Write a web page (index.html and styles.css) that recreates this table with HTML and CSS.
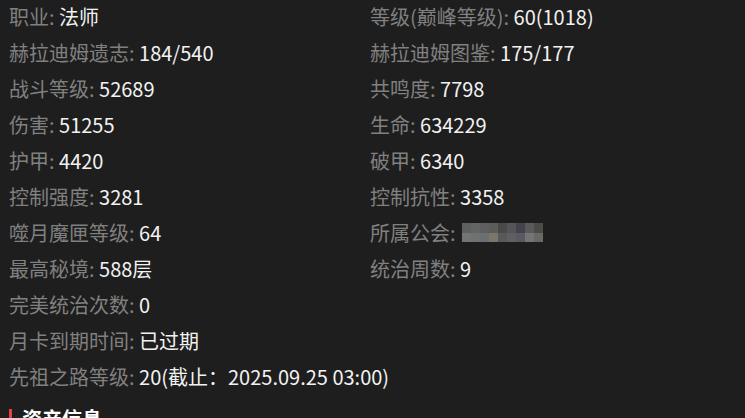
FILE: index.html
```html
<!DOCTYPE html>
<html lang="zh-CN">
<head>
<meta charset="utf-8">
<link rel="stylesheet" href="styles.css">
</head>
<body>
<div class="page">
  <div class="grid">
    <div class="row"><span class="label">职业: </span><span class="value">法师</span></div>
    <div class="row"><span class="label">等级(巅峰等级): </span><span class="value">60(1018)</span></div>
    <div class="row"><span class="label">赫拉迪姆遗志: </span><span class="value">184/540</span></div>
    <div class="row"><span class="label">赫拉迪姆图鉴: </span><span class="value">175/177</span></div>
    <div class="row"><span class="label">战斗等级: </span><span class="value">52689</span></div>
    <div class="row"><span class="label">共鸣度: </span><span class="value">7798</span></div>
    <div class="row"><span class="label">伤害: </span><span class="value">51255</span></div>
    <div class="row"><span class="label">生命: </span><span class="value">634229</span></div>
    <div class="row"><span class="label">护甲: </span><span class="value">4420</span></div>
    <div class="row"><span class="label">破甲: </span><span class="value">6340</span></div>
    <div class="row"><span class="label">控制强度: </span><span class="value">3281</span></div>
    <div class="row"><span class="label">控制抗性: </span><span class="value">3358</span></div>
    <div class="row"><span class="label">噬月魔匣等级: </span><span class="value">64</span></div>
    <div class="row"><span class="label">所属公会: </span><span class="blur"><i style="background:#5d6260"></i><i style="background:#646464"></i><i style="background:#5f5f5f"></i><i style="background:#5d5c5a"></i><i style="background:#4a4a4a"></i><i style="background:#555558"></i><i style="background:#43424f"></i><i style="background:#5a5a5c"></i><i style="background:#4a4c48"></i><i style="background:#737475"></i><i style="background:#6f7273"></i><i style="background:#6a7071"></i><i style="background:#7c766a"></i><i style="background:#58595b"></i><i style="background:#5f5f63"></i><i style="background:#5a5962"></i><i style="background:#737476"></i><i style="background:#6a6765"></i></span></div>
    <div class="row"><span class="label">最高秘境: </span><span class="value">588层</span></div>
    <div class="row"><span class="label">统治周数: </span><span class="value">9</span></div>
    <div class="row full"><span class="label">完美统治次数: </span><span class="value">0</span></div>
    <div class="row full"><span class="label">月卡到期时间: </span><span class="value">已过期</span></div>
    <div class="row full"><span class="label">先祖之路等级: </span><span class="value">20(截止：2025.09.25 03:00)</span></div>
  </div>
  <h2 class="section-title">资产信息</h2>
</div>
</body>
</html>
```

FILE: styles.css
```css
html, body {
  margin: 0;
  padding: 0;
  background: #1e1e1e;
}
body {
  font-family: "Noto Sans CJK SC", "Noto Sans", sans-serif;
  font-size: 20px;
  overflow: hidden;
}
.page {
  padding: 5px 0 0 9px;
}
.grid {
  display: grid;
  grid-template-columns: 361px 1fr;
  row-gap: 12px;
}
.row {
  line-height: 24px;
  height: 24px;
  white-space: nowrap;
}
.row.full {
  grid-column: 1 / -1;
}
.label {
  color: #808080;
}
.value {
  color: #f2f2f2;
}
.blur {
  display: inline-grid;
  grid-template-columns: repeat(9, 9px);
  grid-template-rows: 9.5px 9.5px;
  margin: 2px 0 0 2px;
  vertical-align: top;
}
.blur i {
  display: block;
}
.section-title {
  margin: 20px 0 0 0;
  padding-left: 10px;
  border-left: 3px solid #e0434b;
  color: #ffffff;
  font-size: 20px;
  font-weight: bold;
  line-height: 20px;
}
```
